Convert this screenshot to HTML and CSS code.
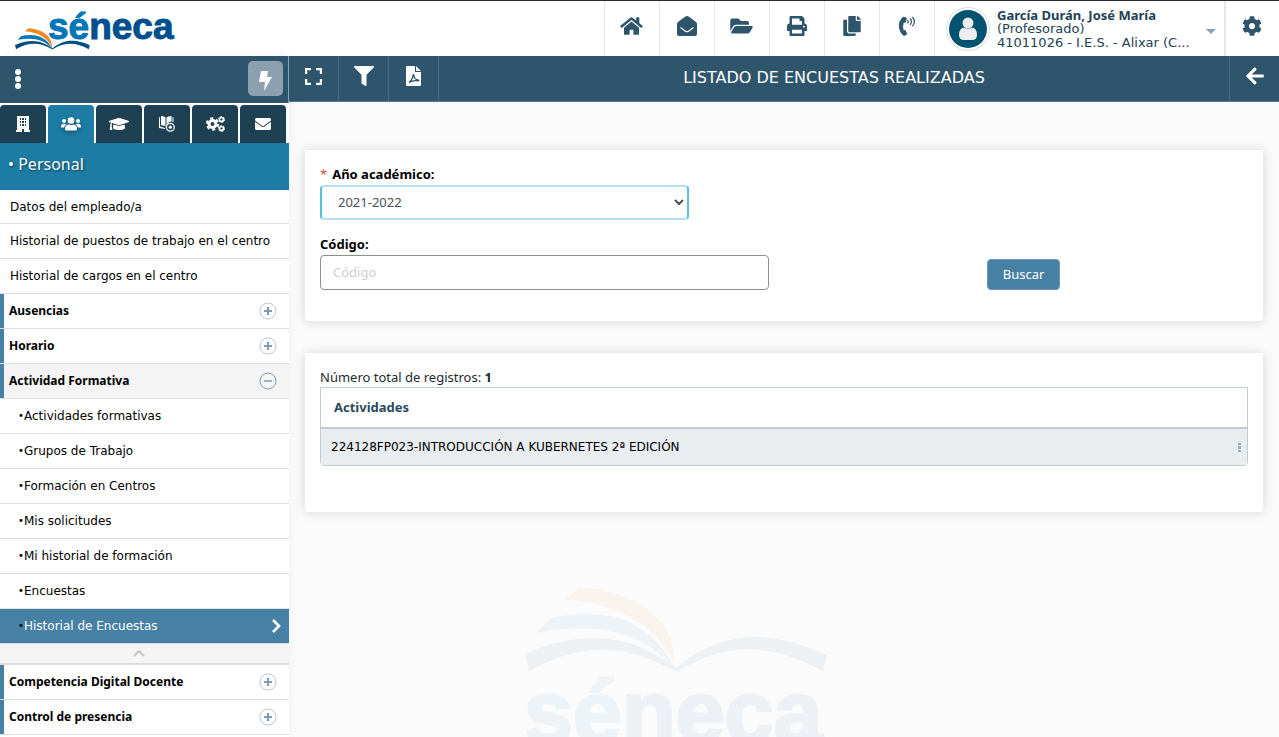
FILE: index.html
```html
<!DOCTYPE html>
<html lang="es">
<head>
<meta charset="utf-8">
<title>Séneca - Listado de encuestas realizadas</title>
<link rel="stylesheet" href="styles.css">
</head>
<body>
<svg class="defs" aria-hidden="true">
  <symbol id="book" viewBox="0 0 303 86">
    <path class="page-orange" d="M39 12 56 0C112 5 152 31 150 81C137 42 95 16 39 12Z"/>
    <path class="page-light" d="M11 46 25 31C82 20 124 31 150 82C113 41 70 36 11 46Z"/>
    <path class="page-dark" d="M0 67C62 40 109 49 151 81C199 41 247 43 302 68L298 84C246 57 206 53 151 85C104 58 60 53 4 84Z"/>
  </symbol>
  <symbol id="plus" viewBox="0 0 18 18"><circle cx="9" cy="9" r="8" fill="none" stroke="#b9cad6"/><path d="M9 5v8M5 9h8" stroke="#7f9db2" stroke-width="2"/></symbol>
  <symbol id="minus" viewBox="0 0 18 18"><circle cx="9" cy="9" r="8" fill="none" stroke="#7f9db2"/><path d="M5 9h8" stroke="#7f9db2" stroke-width="1.500"/></symbol>
</svg>

<header class="topbar">
  <a class="logo" href="#" aria-label="Séneca">
    <svg viewBox="0 0 160 46" width="160" height="46">
      <text class="logo-light" x="33" y="34">sé<tspan class="logo-dark">neca</tspan></text>
      <use href="#book" x="0" y="23" width="75" height="22"/>
    </svg>
  </a>
  <nav class="quick">
    <a href="#" aria-label="Inicio"><svg width="23" height="20" viewBox="0 0 576 512"><path d="M280.370 148.260L96 300.110V464a16 16 0 0 0 16 16l112.060-.29a16 16 0 0 0 15.920-16V368a16 16 0 0 1 16-16h64a16 16 0 0 1 16 16v95.640a16 16 0 0 0 16 16.050L464 480a16 16 0 0 0 16-16V300L295.670 148.260a12.190 12.190 0 0 0-15.300 0zM571.600 251.470L488 182.560V44.050a12 12 0 0 0-12-12h-56a12 12 0 0 0-12 12v72.610L318.470 43a48 48 0 0 0-61 0L4.340 251.470a12 12 0 0 0-1.600 16.900l25.500 31A12 12 0 0 0 45.150 301l235.220-193.740a12.190 12.190 0 0 1 15.300 0L530.900 301a12 12 0 0 0 16.900-1.600l25.500-31a12 12 0 0 0-1.700-16.930z"/></svg></a>
    <a href="#" aria-label="Correo"><svg width="20" height="20" viewBox="0 0 20 20"><path d="M0 8Q0 7 1 6L8 .800Q10-.600 12 .800L19 6q1 1 1 2v10q0 2-2 2H2q-2 0-2-2z"/><path d="M3.500 11.500 8.500 15.200q1.500 1 3 0l5-3.700" fill="none" stroke="#fff" stroke-width="1.200"/></svg></a>
    <a href="#" aria-label="Documentos"><svg width="23" height="20" viewBox="0 0 576 512"><path d="M572.694 292.093L500.270 416.248A63.997 63.997 0 0 1 444.989 448H45.025c-18.523 0-30.064-20.093-20.731-36.093l72.424-124.155A64 64 0 0 1 152 256h399.964c18.523 0 30.064 20.093 20.730 36.093zM152 224h328v-48c0-26.510-21.490-48-48-48H272l-64-64H48C21.490 64 0 85.490 0 112v278.046l69.077-118.418C86.214 242.250 117.989 224 152 224z"/></svg></a>
    <a href="#" aria-label="Imprimir"><svg width="20" height="20" viewBox="0 0 512 512"><path d="M448 192V77.250c0-8.490-3.370-16.620-9.370-22.630L393.370 9.370c-6-6-14.140-9.370-22.630-9.370H96C78.330 0 64 14.330 64 32v160c-35.350 0-64 28.650-64 64v112c0 8.840 7.160 16 16 16h48v96c0 17.670 14.330 32 32 32h320c17.670 0 32-14.330 32-32v-96h48c8.840 0 16-7.160 16-16V256c0-35.350-28.650-64-64-64zm-64 256H128v-96h256v96zm0-224H128V64h192v48c0 8.840 7.160 16 16 16h48v96zm48 72c-13.250 0-24-10.750-24-24 0-13.260 10.750-24 24-24s24 10.740 24 24c0 13.250-10.750 24-24 24z"/></svg></a>
    <a href="#" aria-label="Copias"><svg width="18" height="20" viewBox="0 0 448 512"><path d="M320 448v40c0 13.255-10.745 24-24 24H24c-13.255 0-24-10.745-24-24V120c0-13.255 10.745-24 24-24h72v296c0 30.879 25.121 56 56 56h168zm0-344V0H152c-13.255 0-24 10.745-24 24v368c0 13.255 10.745 24 24 24h272c13.255 0 24-10.745 24-24V128H344c-13.200 0-24-10.800-24-24zm120.971-31.029L375.029 7.029A24 24 0 0 0 358.059 0H352v96h96v-6.059a24 24 0 0 0-7.029-16.970z"/></svg></a>
    <a href="#" aria-label="Teléfono"><svg width="16" height="20" viewBox="0 0 16 20"><path d="M4 1.200Q0 5 .300 10.500T4.800 19.600L7.700 18.200 6.300 14.600 4.200 14.800Q3 10.500 4.200 6.400L6.500 6 7.300 2z" stroke="#2f556d" stroke-linejoin="round"/><path d="M8.500 4q1.500 1.600 0 3.400M11 2.300q3 3.300 0 6.600M13.400.800q4 4.700 0 9.400" fill="none" stroke="#2f556d" stroke-width="1.200"/></svg></a>
  </nav>
  <button class="user" type="button">
    <svg class="avatar" width="44" height="44" viewBox="0 0 44 44"><circle cx="22" cy="22" r="21.500" fill="#fff" stroke="#ddd"/><circle cx="22" cy="22" r="19" fill="#00536f"/><circle cx="22" cy="16" r="5.500" fill="#ededed"/><path d="M13 28q0-7 5-7.300 4 2.300 8 0 5 .300 5 7.300 0 5-5 5h-8q-5 0-5-5z" fill="#ededed"/></svg>
    <span class="user-text"><b>García Durán, José María</b><span>(Profesorado)</span><span>41011026 - I.E.S. - Alixar (C...</span></span>
    <svg class="caret" width="10" height="5" viewBox="0 0 10 5"><path d="M0 0h10L5 5z" fill="#87a1b3"/></svg>
  </button>
  <a class="settings" href="#" aria-label="Configuración"><svg width="20" height="20" viewBox="0 0 512 512"><path d="M487.400 315.700l-42.600-24.600c4.300-23.200 4.300-47 0-70.200l42.600-24.600c4.900-2.800 7.100-8.600 5.500-14-11.100-35.600-30-67.800-54.700-94.600-3.800-4.100-10-5.100-14.800-2.300L380.800 110c-17.900-15.400-38.500-27.300-60.800-35.100V25.800c0-5.600-3.900-10.500-9.400-11.700-36.700-8.200-74.300-7.800-109.200 0-5.500 1.200-9.400 6.100-9.400 11.700V75c-22.200 7.900-42.800 19.800-60.800 35.100L88.700 85.500c-4.900-2.800-11-1.900-14.800 2.300-24.700 26.700-43.600 58.900-54.700 94.600-1.700 5.400.6 11.200 5.500 14L67.300 221c-4.300 23.200-4.300 47 0 70.200l-42.600 24.600c-4.900 2.800-7.100 8.600-5.500 14 11.100 35.600 30 67.800 54.700 94.600 3.800 4.100 10 5.100 14.800 2.300l42.600-24.600c17.900 15.400 38.500 27.300 60.800 35.100v49.200c0 5.600 3.900 10.500 9.400 11.700 36.700 8.200 74.300 7.800 109.200 0 5.500-1.200 9.400-6.100 9.400-11.700v-49.200c22.200-7.900 42.800-19.800 60.800-35.100l42.600 24.600c4.900 2.800 11 1.900 14.800-2.300 24.700-26.700 43.600-58.900 54.700-94.600 1.500-5.500-.7-11.300-5.600-14.100zM256 336c-44.100 0-80-35.900-80-80s35.900-80 80-80 80 35.900 80 80-35.900 80-80 80z"/></svg></a>
</header>

<div class="shell">
  <aside class="sidebar">
    <div class="side-tools">
      <button class="dots" type="button" aria-label="Menú"><svg width="6" height="20" viewBox="0 0 6 20" fill="#fff"><circle cx="3" cy="3" r="3"/><circle cx="3" cy="10" r="3"/><circle cx="3" cy="17" r="3"/></svg></button>
      <button class="bolt" type="button" aria-label="Accesos rápidos"><svg width="13" height="20" viewBox="0 0 13 20"><path d="M2 0h7L8 6h5L5 20 6 11H0z" fill="#fff"/></svg></button>
    </div>
    <nav class="tabs">
      <a href="#" aria-label="Centro"><svg width="14" height="16" viewBox="0 0 14 16"><path fill-rule="evenodd" d="M1 0h12v14h1v2H8v-3H6v3H0v-2h1zM4 2v2h1V2zm2 0v2h2V2zm3 0v2h1V2zM4 5v2h1V5zm2 0v2h2V5zm3 0v2h1V5zM4 8v2h1V8zm2 0v2h2V8zm3 0v2h1V8z"/></svg></a>
      <a class="active" href="#" aria-label="Personal"><svg width="20" height="14" viewBox="0 0 20 14"><circle cx="10" cy="3.500" r="3.300"/><circle cx="3" cy="4" r="2"/><circle cx="17" cy="4" r="2"/><path d="M4 12q0-4.500 4-4.500 2 1 4 0 4 0 4 4.500 0 1.500-1.500 1.500h-9Q4 13.500 4 12zM0 10q0-3.200 3-3.200 1.500 0 2.300.700Q3.300 8.500 3.200 10.500H.700Q0 10.500 0 10zM20 10q0-3.200-3-3.200-1.500 0-2.300.700 2 1 2.100 3h2.500q.700 0 .700-.500z"/></svg></a>
      <a href="#" aria-label="Alumnado"><svg width="20" height="16" viewBox="0 0 640 512"><path d="M622.340 153.200L343.400 67.500c-15.200-4.670-31.600-4.670-46.790 0L17.660 153.200c-23.540 7.230-23.540 38.360 0 45.590l48.630 14.940c-10.670 13.190-17.230 29.280-17.880 46.900C38.780 266.150 32 276.110 32 288c0 10.780 5.680 19.850 13.860 25.650L20.330 428.530C18.110 438.520 25.710 448 35.940 448h56.110c10.240 0 17.840-9.480 15.620-19.470L82.140 313.650C90.320 307.850 96 298.780 96 288c0-11.570-6.470-21.250-15.660-26.870.76-15.020 8.440-28.300 20.690-36.720L296.600 284.500c9.060 2.780 26.440 6.250 46.790 0l278.950-85.700c23.550-7.240 23.550-38.360 0-45.600zM352.790 315.090c-28.530 8.760-52.840 3.920-65.590 0l-145.020-44.550L128 384c0 35.350 85.960 64 192 64s192-28.650 192-64l-14.180-113.470-145.030 44.560z"/></svg></a>
      <a href="#" aria-label="Programaciones"><svg width="16" height="16" viewBox="0 0 16 16"><path d="M0 2q0-1 1-1V10.500l5 1.500v1L0 12zM2 0q3 0 4.500 1.500v9Q5 9.300 2 9.300zM7.500 1.500Q9 0 12.500 0v5.500Q9 5.500 7.500 9zM13.500 1q1.200 0 1 1v4h-1z"/><circle cx="11.300" cy="11.200" r="3.900" fill="none" stroke="#fff" stroke-width="1.300"/><circle cx="11.300" cy="11.200" r="1.600"/></svg></a>
      <a href="#" aria-label="Procesos"><svg width="19" height="16" viewBox="0 0 19 16"><g fill="none" stroke="#fff"><circle cx="6.500" cy="8" r="3.500" stroke-width="3"/><circle cx="6.500" cy="8" r="5.600" stroke-width="2.200" stroke-dasharray="3 2.860"/><circle cx="15.500" cy="3.500" r="2" stroke-width="1.700"/><circle cx="15.500" cy="3.500" r="3" stroke-width="1" stroke-dasharray="1.600 1.540"/><circle cx="15.500" cy="12.500" r="2" stroke-width="1.700"/><circle cx="15.500" cy="12.500" r="3" stroke-width="1" stroke-dasharray="1.600 1.540"/></g></svg></a>
      <a href="#" aria-label="Mensajes"><svg width="16" height="16" viewBox="0 0 512 512"><path d="M502.300 190.800c3.900-3.100 9.700-.2 9.700 4.700V400c0 26.500-21.500 48-48 48H48c-26.500 0-48-21.500-48-48V195.600c0-5 5.700-7.800 9.700-4.700 22.400 17.400 52.100 39.500 154.100 113.600 21.100 15.400 56.700 47.800 92.200 47.600 35.700.3 72-32.800 92.300-47.600 102-74.100 131.600-96.300 154-113.700zM256 320c23.200.4 56.600-29.200 73.400-41.400 132.700-96.300 142.800-104.700 173.400-128.700 5.800-4.500 9.200-11.500 9.200-18.900v-19c0-26.500-21.500-48-48-48H48c-26.500 0-48 21.500-48 48v19c0 7.400 3.400 14.300 9.200 18.900 30.600 23.900 40.700 32.400 173.400 128.700 16.800 12.200 50.200 41.800 73.400 41.400z"/></svg></a>
    </nav>
    <h2 class="side-title">• Personal</h2>
    <ul class="menu">
      <li><a href="#">Datos del empleado/a</a></li>
      <li><a href="#">Historial de puestos de trabajo en el centro</a></li>
      <li><a href="#">Historial de cargos en el centro</a></li>
      <li class="group"><a href="#">Ausencias<svg width="18" height="18"><use href="#plus"/></svg></a></li>
      <li class="group"><a href="#">Horario<svg width="18" height="18"><use href="#plus"/></svg></a></li>
      <li class="group open"><a href="#">Actividad Formativa<svg width="18" height="18"><use href="#minus"/></svg></a></li>
      <li class="sub"><a href="#">Actividades formativas</a></li>
      <li class="sub"><a href="#">Grupos de Trabajo</a></li>
      <li class="sub"><a href="#">Formación en Centros</a></li>
      <li class="sub"><a href="#">Mis solicitudes</a></li>
      <li class="sub"><a href="#">Mi historial de formación</a></li>
      <li class="sub"><a href="#">Encuestas</a></li>
      <li class="sub current"><a href="#">Historial de Encuestas<svg width="9" height="14" viewBox="0 0 9 14"><path d="m1 1 6 6-6 6" fill="none" stroke="#fff" stroke-width="2.600"/></svg></a></li>
      <li class="fold"><button type="button" aria-label="Plegar"><svg width="12" height="7" viewBox="0 0 12 7"><path d="m1 6 5-5 5 5" fill="none" stroke="#c4c4c4" stroke-width="2"/></svg></button></li>
      <li class="group"><a href="#">Competencia Digital Docente<svg width="18" height="18"><use href="#plus"/></svg></a></li>
      <li class="group"><a href="#">Control de presencia<svg width="18" height="18"><use href="#plus"/></svg></a></li>
    </ul>
  </aside>

  <main class="main">
    <div class="toolbar">
      <button type="button" aria-label="Pantalla completa"><svg width="17" height="17" viewBox="0 0 17 17"><path d="M1 6V1h5M11 1h5v5M16 11v5h-5M6 16H1v-5" fill="none" stroke="#fff" stroke-width="2.400"/></svg></button>
      <button type="button" aria-label="Filtrar"><svg width="20" height="20" viewBox="0 0 512 512"><path d="M487.976 0H24.028C2.710 0-8.047 25.866 7.058 40.971L192 225.941V432c0 7.831 3.821 15.170 10.237 19.662l80 55.980C298.020 518.690 320 507.493 320 487.980V225.941l184.947-184.970C520.021 25.896 509.338 0 487.976 0z"/></svg></button>
      <button type="button" aria-label="Exportar PDF"><svg width="15" height="20" viewBox="0 0 15 20"><path d="M1 0h8v6h6v13q0 1-1 1H1q-1 0-1-1V1q0-1 1-1zM10 0l5 5h-5z"/><path d="M3 16.500Q6.500 14 7 9.500q.500-2 1 0 0 4 4.500 4.500 1 .800-.500.800Q7 14 3 16.500z" fill="none" stroke="#2f556d" stroke-width="1.200"/></svg></button>
      <h1>LISTADO DE ENCUESTAS REALIZADAS</h1>
      <button class="back" type="button" aria-label="Volver"><svg width="18" height="20" viewBox="0 0 448 512"><path d="M257.500 445.100l-22.200 22.200c-9.400 9.400-24.600 9.400-33.900 0L7 273c-9.400-9.400-9.400-24.600 0-33.900L201.400 44.700c9.400-9.400 24.600-9.400 33.900 0l22.200 22.200c9.500 9.500 9.300 25-.4 34.300L136.600 216H424c13.300 0 24 10.700 24 24v32c0 13.300-10.700 24-24 24H136.600l120.500 114.800c9.800 9.300 10 24.800.4 34.300z"/></svg></button>
    </div>
    <div class="content">
      <form class="card search">
        <div class="fields">
          <label for="anio"><span class="req">*</span>Año académico:</label>
          <select id="anio"><option>2021-2022</option></select>
          <label for="codigo">Código:</label>
          <input id="codigo" type="text" placeholder="Código">
        </div>
        <div class="actions"><button type="button">Buscar</button></div>
      </form>
      <section class="card results">
        <p>Número total de registros: <b>1</b></p>
        <table>
          <thead><tr><th scope="col">Actividades</th></tr></thead>
          <tbody><tr><td><div class="cell">224128FP023-INTRODUCCIÓN A KUBERNETES 2ª EDICIÓN<svg width="3" height="9" viewBox="0 0 3 9" fill="#97b0bd"><path d="M0 0h3v2H0zM0 3h3v3H0zM0 7h3v2H0z"/></svg></div></td></tr></tbody>
        </table>
      </section>
    </div>
    <svg class="watermark" width="303" height="180" viewBox="0 0 303 180" aria-hidden="true">
      <use href="#book" width="303" height="86"/>
      <text class="logo-light" x="-1" y="155">sé<tspan class="logo-dark">neca</tspan></text>
    </svg>
  </main>
</div>
</body>
</html>
```
FILE: styles.css
```css
* { box-sizing: border-box; }
body {
  margin: 0;
  height: 100vh;
  overflow: hidden;
  display: flex;
  flex-direction: column;
  font: 13px/18px "Noto Sans", "Open Sans", sans-serif;
  color: #212b31;
  background: #fbfbfb;
}
a { color: inherit; text-decoration: none; }
button { font: inherit; color: inherit; border: 0; padding: 0; background: none; cursor: pointer; }
svg { display: block; flex: none; }
.defs { position: absolute; width: 0; height: 0; }

.page-orange { fill: #f08a1d; }
.page-light { fill: #0078b7; }
.page-dark { fill: #004f83; }
.logo-light { font: bold 37px "Liberation Sans", Arial, sans-serif; fill: #0077b8; stroke: #0077b8; }
.logo-dark { fill: #00508f; stroke: #00508f; }

.topbar {
  flex: none;
  display: flex;
  height: 56px;
  border-top: 1px solid #2b2a3a;
  background: #fff;
  fill: #2f556d;
}
.logo { padding: 4px 0 0 15px; margin-right: auto; }
.quick { display: flex; }
.quick a, .settings {
  width: 55px;
  display: flex;
  justify-content: center;
  align-items: center;
  padding: 0 1px 5px 0;
  border-left: 1px solid #e6e6e6;
}
.user {
  width: 290px;
  display: flex;
  align-items: center;
  padding: 0 8px 0 11px;
  border-left: 1px solid #e6e6e6;
  text-align: left;
  color: #234154;
}
.user-text {
  flex: 1;
  display: flex;
  flex-direction: column;
  padding-left: 7px;
  font: 13px/14px "DejaVu Sans", sans-serif;
}
.user-text b { font: bold 13px/14px "Noto Sans", sans-serif; }
.caret { margin-top: 5px; }
.settings { border-left-width: 2px; }

.shell { flex: 1; min-height: 0; display: flex; }
.sidebar { flex: none; width: 289px; background: #fff; box-shadow: 0 0 12px rgba(0, 0, 0, .05); }
.side-tools {
  height: 47px;
  display: flex;
  justify-content: space-between;
  align-items: center;
  padding: 0 5px 2px 15px;
  background: #2f556d;
  border-right: 1px solid #8ba1b0;
}
.bolt {
  width: 35px;
  height: 35px;
  display: grid;
  place-items: center;
  padding-top: 4px;
  border-radius: 5px;
  background: #8ba1b0;
}
.tabs { display: flex; gap: 2px; padding-top: 2px; }
.tabs a {
  width: 46px;
  height: 38px;
  display: grid;
  place-items: center;
  border-radius: 4px 4px 0 0;
  background: #1f4053;
  fill: #fff;
}
.tabs .active { background: #1c7ca3; }
.tabs .active svg { filter: drop-shadow(0 2px 2px rgba(0, 0, 0, .3)); }
.side-title {
  margin: 0;
  height: 47px;
  padding: 10px 8px;
  font-size: 16px;
  font-weight: 400;
  line-height: 22px;
  color: #fff;
  background: #1c7ca3;
  text-shadow: 1px 1px 2px rgba(0, 0, 0, .5);
}
.menu { list-style: none; margin: 0; padding: 0; color: #000; font: 12px/18px "DejaVu Sans", sans-serif; }
.menu li { height: 35px; border-bottom: 1px solid #dedede; }
.menu li:first-child { height: 34px; }
.menu a { height: 100%; display: flex; align-items: center; justify-content: space-between; padding: 0 8px 0 10px; }
.menu .group a { padding: 0 12px 0 5px; border-left: 4px solid #4780a5; font-family: "Noto Sans", sans-serif; font-weight: 700; }
.menu .open { background: #f5f5f5; }
.menu .sub a { padding-left: 18px; justify-content: flex-start; }
.menu .sub a::before { content: "•"; width: 6px; font-size: 10px; color: #000; }
.menu .sub svg { margin-left: auto; }
.menu .current { background: #4780a5; color: #fff; }
.menu .fold { height: 21px; border-bottom-width: 2px; background: #f5f5f5; }
.fold button { width: 100%; height: 100%; display: grid; place-items: center; padding-right: 12px; }

.main { flex: 1; min-width: 0; position: relative; overflow: hidden; }
.toolbar {
  height: 46px;
  display: flex;
  background: #2f556d;
  border-bottom: 1px solid #587689;
  color: #fff;
  fill: #fff;
}
.toolbar button { width: 50px; display: grid; place-items: center; padding-bottom: 5px; border-right: 1px solid #4b6d82; }
.toolbar .back { border-right: 0; border-left: 1px solid #4b6d82; }
.toolbar h1 { flex: 1; margin: 0; font: 16px/43px "DejaVu Sans", sans-serif; text-align: center; }
.content { position: relative; z-index: 1; display: flex; flex-direction: column; gap: 31px; padding: 48px 15px; }
.card {
  border: 1px solid #e9edf0;
  border-top-color: #fff;
  border-radius: 0 0 5px 5px;
  background: #fff;
  box-shadow: 0 0 12px rgba(0, 0, 0, .14);
}
.search { display: grid; grid-template-columns: 1fr 1fr; gap: 30px; padding: 14px 15px 31px; }
.fields { display: flex; flex-direction: column; align-items: flex-start; }
.fields label { font-weight: 700; color: #000; line-height: 18px; margin-bottom: 2px; }
.req { margin-right: 5px; color: #e74c3c; font-weight: 400; }
.fields select {
  width: calc(83% - 4px);
  height: 35px;
  margin-bottom: 15px;
  padding: 0 0 2px 12px;
  border: 2px solid #b5e1ee;
  border-left-color: #5bc0de;
  border-right-color: #5bc0de;
  border-radius: 4px;
  background: #fff;
  color: #495057;
  font: inherit;
}
.fields input {
  width: 100%;
  height: 35px;
  padding: 0 12px 2px;
  border: 1px solid #8c8f92;
  border-radius: 4px;
  color: #495057;
  font: inherit;
}
.fields input::placeholder { color: #d0d0d0; }
.actions { display: flex; justify-content: center; align-items: flex-end; }
.actions button {
  height: 31px;
  padding: 0 15px 2px;
  border: 1px solid #6b96b2;
  border-radius: 4px;
  background: #4780a5;
  color: #fff;
}
.results { padding: 14px 15px 46px; }
.results p { margin: 0 0 1px; }
table { width: 100%; border: 1px solid #c0cbd3; border-radius: 0 0 4px 4px; border-spacing: 0; }
th { height: 41px; padding: 0 13px 2px; text-align: left; color: #2a4a5e; border-bottom: 2px solid #c0cbd3; }
td { height: 36px; padding: 0 6px 0 10px; background: #e9edf0; color: #000; font: 12px/18px "DejaVu Sans", sans-serif; }
.cell { display: flex; justify-content: space-between; align-items: center; }
.watermark { position: absolute; left: 236px; bottom: -30px; opacity: .05; }
.watermark .logo-light { font-size: 88px; stroke-width: 3px; }
```
